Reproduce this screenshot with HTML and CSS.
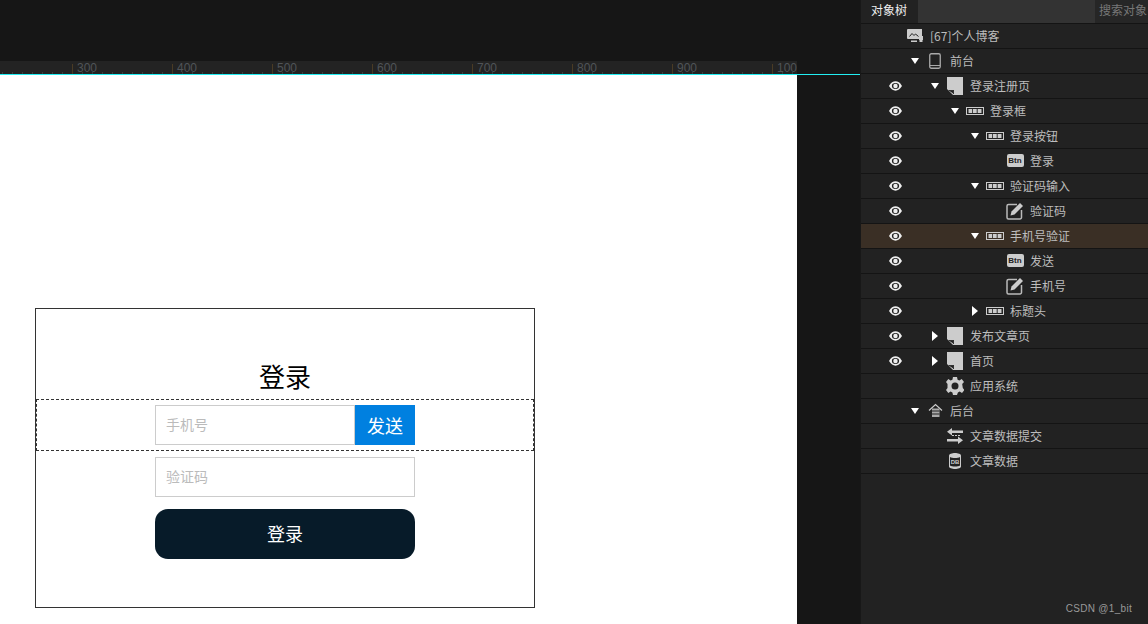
FILE: index.html
```html
<!DOCTYPE html>
<html lang="en">
<head>
    <meta charset="UTF-8">
    <meta name="viewport" content="width=device-width, initial-scale=1.0">
    <title>对象树</title>
    <link rel="stylesheet" href="styles.css">
</head>
<body>
    <!-- Icons -->
    <svg class="defs" width="0" height="0">
        <symbol id="i-eye" viewBox="0 0 14 10">
            <path d="M0 5C2 1.500 4.500 0 7 0s5 1.500 7 5c-2 3.500-4.500 5-7 5S2 8.500 0 5z" fill="#eee"/>
            <ellipse cx="7" cy="5" rx="3.900" ry="3.100" fill="#222"/>
            <circle cx="7" cy="5" r="2.400" fill="#eee"/>
        </symbol>
        <symbol id="i-down" viewBox="0 0 10 8">
            <path d="M1 1h8L5 7z" fill="#fff"/>
        </symbol>
        <symbol id="i-right" viewBox="0 0 8 10">
            <path d="M1 0l6 5-6 5z" fill="#fff"/>
        </symbol>
        <symbol id="i-page" viewBox="0 0 16 18">
            <path d="M0 0h16v18H6L0 12z" fill="#ccc"/>
            <path d="M1 13h6v4z" fill="#222"/>
            <path d="M2 13.500h4.500v3.500" fill="none" stroke="#333"/>
        </symbol>
        <symbol id="i-group" viewBox="0 0 18 8">
            <rect x="0.500" y="0.500" width="17" height="7" fill="none" stroke="#ccc"/>
            <path d="M2.500 2h4v4h-4zM7 2h4v4H7zM11.500 2h4v4h-4z" fill="#ccc"/>
            <path d="M6.500 2v4M11 2v4" stroke="#222" stroke-width="0.600"/>
        </symbol>
        <symbol id="i-edit" viewBox="0 0 18 18">
            <path d="M11 2.500H2.500a1.500 1.500 0 0 0-1.500 1.500v11.500A1.500 1.500 0 0 0 2.500 17H14a1.500 1.500 0 0 0 1.500-1.500V8" fill="none" stroke="#bbb" stroke-width="1.500"/>
            <path d="M4.500 13.500l1-4L14 1l3 3-8.500 8.500z" fill="#ccc"/>
        </symbol>
        <symbol id="i-site" viewBox="0 0 16 14">
            <path d="M1 0h14v7h1v4h-4v-1H1a1 1 0 0 1-1-1V1a1 1 0 0 1 1-1z" fill="#ccc"/>
            <path d="M2.500 7.500l2.500-3 2 2 1.500-1.500 3 2.500" fill="none" stroke="#222"/>
            <path d="M12.500 7h3v6h-3zM4 11.500h6V13H4z" fill="#ccc"/>
        </symbol>
        <symbol id="i-phone" viewBox="0 0 12 16">
            <rect x="0.750" y="0.750" width="10.500" height="14.500" rx="1.500" fill="none" stroke="#aaa" stroke-width="1.300"/>
            <path d="M1 12.500h10" stroke="#aaa"/>
        </symbol>
        <symbol id="i-gear" viewBox="0 0 18 18">
            <path d="M7 0h4l.6 2.700 1.800.8L15.700 2l2.300 3-1.800 2 .3 2 .3 2 1.500 2-2.300 3-2.300-1.400-1.800.8L11 18H7l-.6-2.600-1.800-.8L2.300 16 0 13l1.500-2V7L0 5l2.300-3 2.300 1.500 1.800-.8z" fill="#ccc"/>
            <circle cx="9" cy="9" r="3.500" fill="#222"/>
        </symbol>
        <symbol id="i-cloud" viewBox="0 0 15 15">
            <path d="M1 7.500L7.500 1.500 14 7.500" fill="none" stroke="#ccc" stroke-width="1.200"/>
            <path d="M4 5.500h7.500V14H4z" fill="#aaa"/>
            <path d="M4 8h7.500M4 11h7.500" stroke="#222"/>
        </symbol>
        <symbol id="i-sync" viewBox="0 0 16 16">
            <path d="M5 0v2.500h11v2.500H5v2.500L0 3.750z" fill="#ccc"/>
            <path d="M11 8.500V11H0v2.500h11V16l5-3.750z" fill="#ccc"/>
            <path d="M5 7.500h8" stroke="#ccc" stroke-dasharray="2 1"/>
        </symbol>
    </svg>

    <div class="app">
        <main class="canvas">
            <div class="top-gap"></div>
            <div class="ruler-wrap">
                <div class="ruler">
                    <span class="mark first"></span>
                    <span class="mark">300</span>
                    <span class="mark">400</span>
                    <span class="mark">500</span>
                    <span class="mark">600</span>
                    <span class="mark">700</span>
                    <span class="mark">800</span>
                    <span class="mark">900</span>
                    <span class="mark">100</span>
                </div>
            </div>
            <div class="stage">
                <div class="artboard">
                    <div class="login-box">
                        <h2 class="login-title">登录</h2>
                        <div class="phone-group">
                            <input class="field field-phone" type="text" placeholder="手机号">
                            <button class="send-btn" type="button">发送</button>
                        </div>
                        <input class="field field-code" type="text" placeholder="验证码">
                        <button class="login-btn" type="button">登录</button>
                    </div>
                </div>
            </div>
        </main>

        <aside class="panel">
            <div class="tabs">
                <div class="tab active">对象树</div>
                <div class="tab-fill"></div>
                <div class="tab search">搜索对象</div>
            </div>
            <ul class="tree">
                <li class="row">
                    <span class="eye-slot"></span>
                    <span class="icon-slot"><svg class="ic-site"><use href="#i-site"/></svg></span>
                    <span class="label">[67]个人博客</span>
                </li>
                <li class="row">
                    <span class="eye-slot"></span>
                    <span class="arrow"><svg class="ic-down"><use href="#i-down"/></svg></span>
                    <span class="icon-slot"><svg class="ic-phone"><use href="#i-phone"/></svg></span>
                    <span class="label">前台</span>
                </li>
                <li class="row lv2">
                    <span class="eye-slot"><svg class="ic-eye"><use href="#i-eye"/></svg></span>
                    <span class="arrow"><svg class="ic-down"><use href="#i-down"/></svg></span>
                    <span class="icon-slot"><svg class="ic-page"><use href="#i-page"/></svg></span>
                    <span class="label">登录注册页</span>
                </li>
                <li class="row lv3">
                    <span class="eye-slot"><svg class="ic-eye"><use href="#i-eye"/></svg></span>
                    <span class="arrow"><svg class="ic-down"><use href="#i-down"/></svg></span>
                    <span class="icon-slot"><svg class="ic-group"><use href="#i-group"/></svg></span>
                    <span class="label">登录框</span>
                </li>
                <li class="row lv4">
                    <span class="eye-slot"><svg class="ic-eye"><use href="#i-eye"/></svg></span>
                    <span class="arrow"><svg class="ic-down"><use href="#i-down"/></svg></span>
                    <span class="icon-slot"><svg class="ic-group"><use href="#i-group"/></svg></span>
                    <span class="label">登录按钮</span>
                </li>
                <li class="row lv5">
                    <span class="eye-slot"><svg class="ic-eye"><use href="#i-eye"/></svg></span>
                    <span class="arrow"></span>
                    <span class="icon-slot"><span class="ic-btn">Btn</span></span>
                    <span class="label">登录</span>
                </li>
                <li class="row lv4">
                    <span class="eye-slot"><svg class="ic-eye"><use href="#i-eye"/></svg></span>
                    <span class="arrow"><svg class="ic-down"><use href="#i-down"/></svg></span>
                    <span class="icon-slot"><svg class="ic-group"><use href="#i-group"/></svg></span>
                    <span class="label">验证码输入</span>
                </li>
                <li class="row lv5">
                    <span class="eye-slot"><svg class="ic-eye"><use href="#i-eye"/></svg></span>
                    <span class="arrow"></span>
                    <span class="icon-slot"><svg class="ic-edit"><use href="#i-edit"/></svg></span>
                    <span class="label">验证码</span>
                </li>
                <li class="row lv4 selected">
                    <span class="eye-slot"><svg class="ic-eye"><use href="#i-eye"/></svg></span>
                    <span class="arrow"><svg class="ic-down"><use href="#i-down"/></svg></span>
                    <span class="icon-slot"><svg class="ic-group"><use href="#i-group"/></svg></span>
                    <span class="label">手机号验证</span>
                </li>
                <li class="row lv5">
                    <span class="eye-slot"><svg class="ic-eye"><use href="#i-eye"/></svg></span>
                    <span class="arrow"></span>
                    <span class="icon-slot"><span class="ic-btn">Btn</span></span>
                    <span class="label">发送</span>
                </li>
                <li class="row lv5">
                    <span class="eye-slot"><svg class="ic-eye"><use href="#i-eye"/></svg></span>
                    <span class="arrow"></span>
                    <span class="icon-slot"><svg class="ic-edit"><use href="#i-edit"/></svg></span>
                    <span class="label">手机号</span>
                </li>
                <li class="row lv4">
                    <span class="eye-slot"><svg class="ic-eye"><use href="#i-eye"/></svg></span>
                    <span class="arrow"><svg class="ic-right"><use href="#i-right"/></svg></span>
                    <span class="icon-slot"><svg class="ic-group"><use href="#i-group"/></svg></span>
                    <span class="label">标题头</span>
                </li>
                <li class="row lv2">
                    <span class="eye-slot"><svg class="ic-eye"><use href="#i-eye"/></svg></span>
                    <span class="arrow"><svg class="ic-right"><use href="#i-right"/></svg></span>
                    <span class="icon-slot"><svg class="ic-page"><use href="#i-page"/></svg></span>
                    <span class="label">发布文章页</span>
                </li>
                <li class="row lv2">
                    <span class="eye-slot"><svg class="ic-eye"><use href="#i-eye"/></svg></span>
                    <span class="arrow"><svg class="ic-right"><use href="#i-right"/></svg></span>
                    <span class="icon-slot"><svg class="ic-page"><use href="#i-page"/></svg></span>
                    <span class="label">首页</span>
                </li>
                <li class="row lv2">
                    <span class="eye-slot"></span>
                    <span class="arrow"></span>
                    <span class="icon-slot"><svg class="ic-gear"><use href="#i-gear"/></svg></span>
                    <span class="label">应用系统</span>
                </li>
                <li class="row">
                    <span class="eye-slot"></span>
                    <span class="arrow"><svg class="ic-down"><use href="#i-down"/></svg></span>
                    <span class="icon-slot"><svg class="ic-cloud"><use href="#i-cloud"/></svg></span>
                    <span class="label">后台</span>
                </li>
                <li class="row lv2">
                    <span class="eye-slot"></span>
                    <span class="arrow"></span>
                    <span class="icon-slot"><svg class="ic-sync"><use href="#i-sync"/></svg></span>
                    <span class="label">文章数据提交</span>
                </li>
                <li class="row lv2">
                    <span class="eye-slot"></span>
                    <span class="arrow"></span>
                    <span class="icon-slot">
                        <svg class="ic-db" viewBox="0 0 12 16">
                            <path d="M0 2.500C0 1 3 0 6 0s6 1 6 2.500v11C12 15 9 16 6 16s-6-1-6-2.500z" fill="#ccc"/>
                            <path d="M1 4c2 1.300 8 1.300 10 0v8.500c-2 1.300-8 1.300-10 0z" fill="#222"/>
                            <text x="6" y="11" class="db-text">DB</text>
                        </svg>
                    </span>
                    <span class="label">文章数据</span>
                </li>
            </ul>
            <div class="watermark">CSDN @1_bit</div>
        </aside>
    </div>
</body>
</html>
```

FILE: styles.css
```css
* {
    margin: 0;
    padding: 0;
    box-sizing: border-box;
}

html,
body {
    height: 100%;
    overflow: hidden;
}

body {
    font-family: "Liberation Sans", "Noto Sans CJK SC", sans-serif;
    background-color: #161616;
}

.defs {
    display: block;
    height: 0;
}

.app {
    display: flex;
    height: 624px;
}

/* Canvas */
.canvas {
    width: 860px;
    display: flex;
    flex-direction: column;
    background-color: #161616;
}

.top-gap {
    height: 61px;
}

.ruler-wrap {
    height: 14px;
    border-bottom: 1px solid #22eef2;
}

.ruler {
    width: 797px;
    height: 13px;
    display: flex;
    overflow-x: clip;
    background-color: #232323;
    background-image: repeating-linear-gradient(90deg, #3d3d3d 0, #3d3d3d 1px, transparent 1px, transparent 10px);
    background-size: 100% 2px;
    background-position: 2px bottom;
    background-repeat: no-repeat;
}

.mark {
    flex: 0 0 100px;
    padding: 2px 0 0 5px;
    font-size: 12px;
    line-height: 11px;
    color: #505458;
    background: linear-gradient(#4a3b24, #4a3b24) left 3px / 1px 10px no-repeat;
}

.mark.first {
    flex-basis: 72px;
    background: none;
}

.stage {
    flex: 1;
    display: flex;
}

.artboard {
    width: 797px;
    background-color: white;
    padding: 233px 0 0 35px;
}

/* Login wireframe */
.login-box {
    width: 500px;
    height: 300px;
    border: 1px solid #333;
    display: flex;
    flex-direction: column;
    align-items: center;
}

.login-title {
    height: 90px;
    padding-top: 48px;
    font-size: 26px;
    line-height: 38px;
    font-weight: normal;
    font-family: "Noto Sans CJK SC", sans-serif;
    color: #000;
}

.phone-group {
    width: 498px;
    height: 52px;
    border: 1px dashed #333;
    display: flex;
    justify-content: center;
    align-items: center;
}

.field {
    height: 40px;
    border: 1px solid #ccc;
    padding: 0 10px 2px;
    font-size: 14px;
    font-family: "Noto Sans CJK SC", sans-serif;
    outline: none;
    background-color: white;
}

.field::placeholder {
    color: #bbb;
}

.field-phone {
    width: 200px;
}

.send-btn {
    width: 60px;
    height: 40px;
    padding-bottom: 1px;
    border: none;
    background-color: #0080e0;
    color: white;
    font-size: 18px;
    font-family: "Noto Sans CJK SC", sans-serif;
}

.field-code {
    width: 260px;
    margin-top: 6px;
}

.login-btn {
    width: 260px;
    height: 50px;
    margin-top: 12px;
    padding-bottom: 2px;
    border: none;
    border-radius: 13px;
    background-color: #071b29;
    color: white;
    font-size: 18px;
    font-family: "Noto Sans CJK SC", sans-serif;
}

/* Object tree panel */
.panel {
    position: relative;
    width: 288px;
    background-color: #222;
    border-left: 1px solid #181818;
}

.tabs {
    display: flex;
    height: 24px;
    border-bottom: 1px solid #141414;
    font-size: 12px;
    line-height: 19px;
    font-family: "Noto Sans CJK SC", sans-serif;
}

.tab {
    white-space: nowrap;
    overflow: hidden;
}

.tab.active {
    width: 57px;
    padding-left: 10px;
    background-color: #222;
    color: #eee;
}

.tab-fill {
    flex: 1;
    background-color: #333;
}

.tab.search {
    width: 53px;
    padding-left: 4px;
    background-color: #262626;
    color: #777;
}

.tree {
    list-style: none;
}

.row {
    display: flex;
    align-items: center;
    height: 25px;
    padding-bottom: 1px;
    border-bottom: 1px solid #141414;
    font-size: 12px;
    font-family: "Noto Sans CJK SC", sans-serif;
    color: #bdbdbd;
}

.row.selected {
    background-color: #3a2f25;
}

.eye-slot {
    flex: 0 0 44px;
    display: flex;
    padding-left: 28px;
}

.lv2 .eye-slot {
    margin-right: 20px;
}

.lv3 .eye-slot {
    margin-right: 40px;
}

.lv4 .eye-slot {
    margin-right: 60px;
}

.lv5 .eye-slot {
    margin-right: 80px;
}

.arrow {
    flex: 0 0 20px;
    display: flex;
    justify-content: center;
    align-items: center;
}

.icon-slot {
    flex: 0 0 20px;
    display: flex;
    justify-content: center;
    align-items: center;
}

.label {
    margin-left: 5px;
    white-space: nowrap;
}

.ic-eye {
    width: 13px;
    height: 10px;
}

.ic-down {
    width: 10px;
    height: 8px;
}

.ic-right {
    width: 8px;
    height: 10px;
}

.ic-page {
    width: 16px;
    height: 18px;
}

.ic-group {
    width: 18px;
    height: 8px;
}

.ic-edit {
    width: 18px;
    height: 18px;
}

.ic-site {
    width: 16px;
    height: 14px;
}

.ic-phone {
    width: 12px;
    height: 16px;
}

.ic-gear {
    width: 18px;
    height: 18px;
}

.ic-cloud {
    width: 15px;
    height: 15px;
}

.ic-sync {
    width: 16px;
    height: 16px;
}

.ic-db {
    width: 12px;
    height: 16px;
}

.db-text {
    font: bold 6px "Liberation Sans", sans-serif;
    fill: #ccc;
    text-anchor: middle;
}

.ic-btn {
    width: 17px;
    height: 13px;
    border-radius: 2px;
    background-color: #ccc;
    color: #222;
    font: bold 8px/13px "Liberation Sans", sans-serif;
    text-align: center;
}

.watermark {
    position: absolute;
    right: 16px;
    bottom: 10px;
    font-size: 10px;
    letter-spacing: 0.3px;
    color: #999;
}
```
